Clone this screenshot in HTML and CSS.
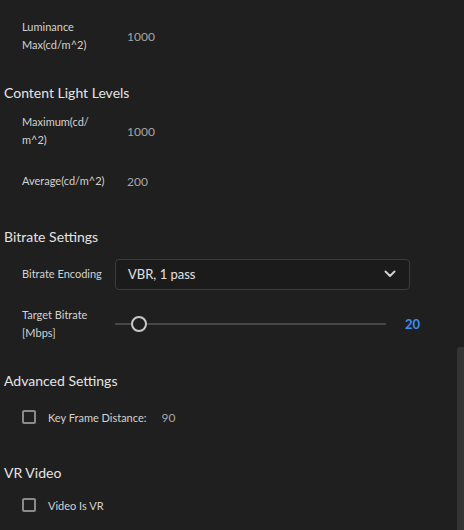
FILE: index.html
```html
<!DOCTYPE html>
<html>
<head>
<meta charset="utf-8">
<link rel="stylesheet" href="styles.css">
</head>
<body>
<div class="panel">
  <div class="row">
    <div class="label">Luminance<br>Max(cd/m^2)</div>
    <div class="value">1000</div>
  </div>

  <div class="heading h-content">Content Light Levels</div>
  <div class="row r-first">
    <div class="label">Maximum(cd/<br>m^2)</div>
    <div class="value">1000</div>
  </div>
  <div class="row r-next">
    <div class="label">Average(cd/m^2)</div>
    <div class="value">200</div>
  </div>

  <div class="heading h-bitrate">Bitrate Settings</div>
  <div class="row r-dropdown">
    <div class="label label-narrow">Bitrate Encoding</div>
    <div class="dropdown">
      <span class="dropdown-text">VBR, 1 pass</span>
      <svg class="chevron" width="12" height="8" viewBox="0 0 12 8"><path d="M1.5 1.5 L6 6 L10.5 1.5" fill="none" stroke="#cfcfcf" stroke-width="2" stroke-linecap="round" stroke-linejoin="round"/></svg>
    </div>
  </div>
  <div class="row r-next">
    <div class="label label-narrow">Target Bitrate<br>[Mbps]</div>
    <div class="slider">
      <div class="track"><div class="thumb"></div></div>
      <div class="slider-value">20</div>
    </div>
  </div>

  <div class="heading h-advanced">Advanced Settings</div>
  <div class="row r-first-tight">
    <div class="checkbox"></div>
    <div class="check-label">Key Frame Distance:</div>
    <div class="value check-value">90</div>
  </div>

  <div class="heading h-vr">VR Video</div>
  <div class="row r-vr">
    <div class="checkbox"></div>
    <div class="check-label">Video Is VR</div>
  </div>
</div>
<div class="scrollbar"></div>
</body>
</html>
```
FILE: styles.css
```css
html, body {
  margin: 0;
  padding: 0;
  background: #1f1f1f;
  height: 100%;
  overflow: hidden;
}
body {
  font-family: Lato, "Open Sans", sans-serif;
  position: relative;
}
.panel {
  padding-top: 18px;
}
.row {
  display: flex;
  align-items: center;
  min-height: 36px;
  padding-left: 22px;
}
.label {
  width: 105px;
  font-size: 11px;
  line-height: 18px;
  color: #d2d2d2;
}
.label-narrow {
  width: 93px;
}
.value {
  font-size: 12px;
  color: #a6a6a6;
}
.heading {
  font-size: 14px;
  line-height: 20px;
  color: #e4e4e4;
  padding-left: 4px;
}
.h-content { margin-top: 29px; }
.h-bitrate { margin-top: 28px; }
.h-advanced { margin-top: 29px; }
.h-vr { margin-top: 28px; }
.r-first { margin-top: 10px; }
.r-next { margin-top: 14px; }
.r-dropdown { margin-top: 9px; }
.r-first-tight { margin-top: 8px; }
.r-vr { margin-top: 4px; }

.dropdown {
  box-sizing: border-box;
  width: 295px;
  height: 31px;
  border: 1px solid #3b3b3b;
  border-radius: 4px;
  background: #1b1b1b;
  display: flex;
  align-items: center;
  justify-content: space-between;
  padding: 0 13px 0 12px;
}
.dropdown-text {
  font-size: 13px;
  color: #e2e2e2;
}
.chevron {
  display: block;
}
.slider {
  display: flex;
  align-items: center;
}
.track {
  position: relative;
  width: 271px;
  height: 2px;
  background: #474747;
}
.thumb {
  position: absolute;
  left: 16px;
  top: -7px;
  box-sizing: border-box;
  width: 16px;
  height: 16px;
  border: 2px solid #c9c9c9;
  border-radius: 50%;
  background: #1f1f1f;
}
.slider-value {
  margin-left: 19px;
  font-size: 13px;
  font-weight: bold;
  color: #3a8ff0;
}
.checkbox {
  box-sizing: border-box;
  width: 14px;
  height: 14px;
  border: 2px solid #8a8a8a;
  border-radius: 2px;
}
.check-label {
  margin-left: 12px;
  font-size: 11px;
  color: #d2d2d2;
}
.check-value {
  margin-left: 15px;
}
.scrollbar {
  position: absolute;
  right: 0;
  top: 347px;
  bottom: 0;
  width: 7px;
  background: #343434;
  border-top-left-radius: 3px;
}
```
